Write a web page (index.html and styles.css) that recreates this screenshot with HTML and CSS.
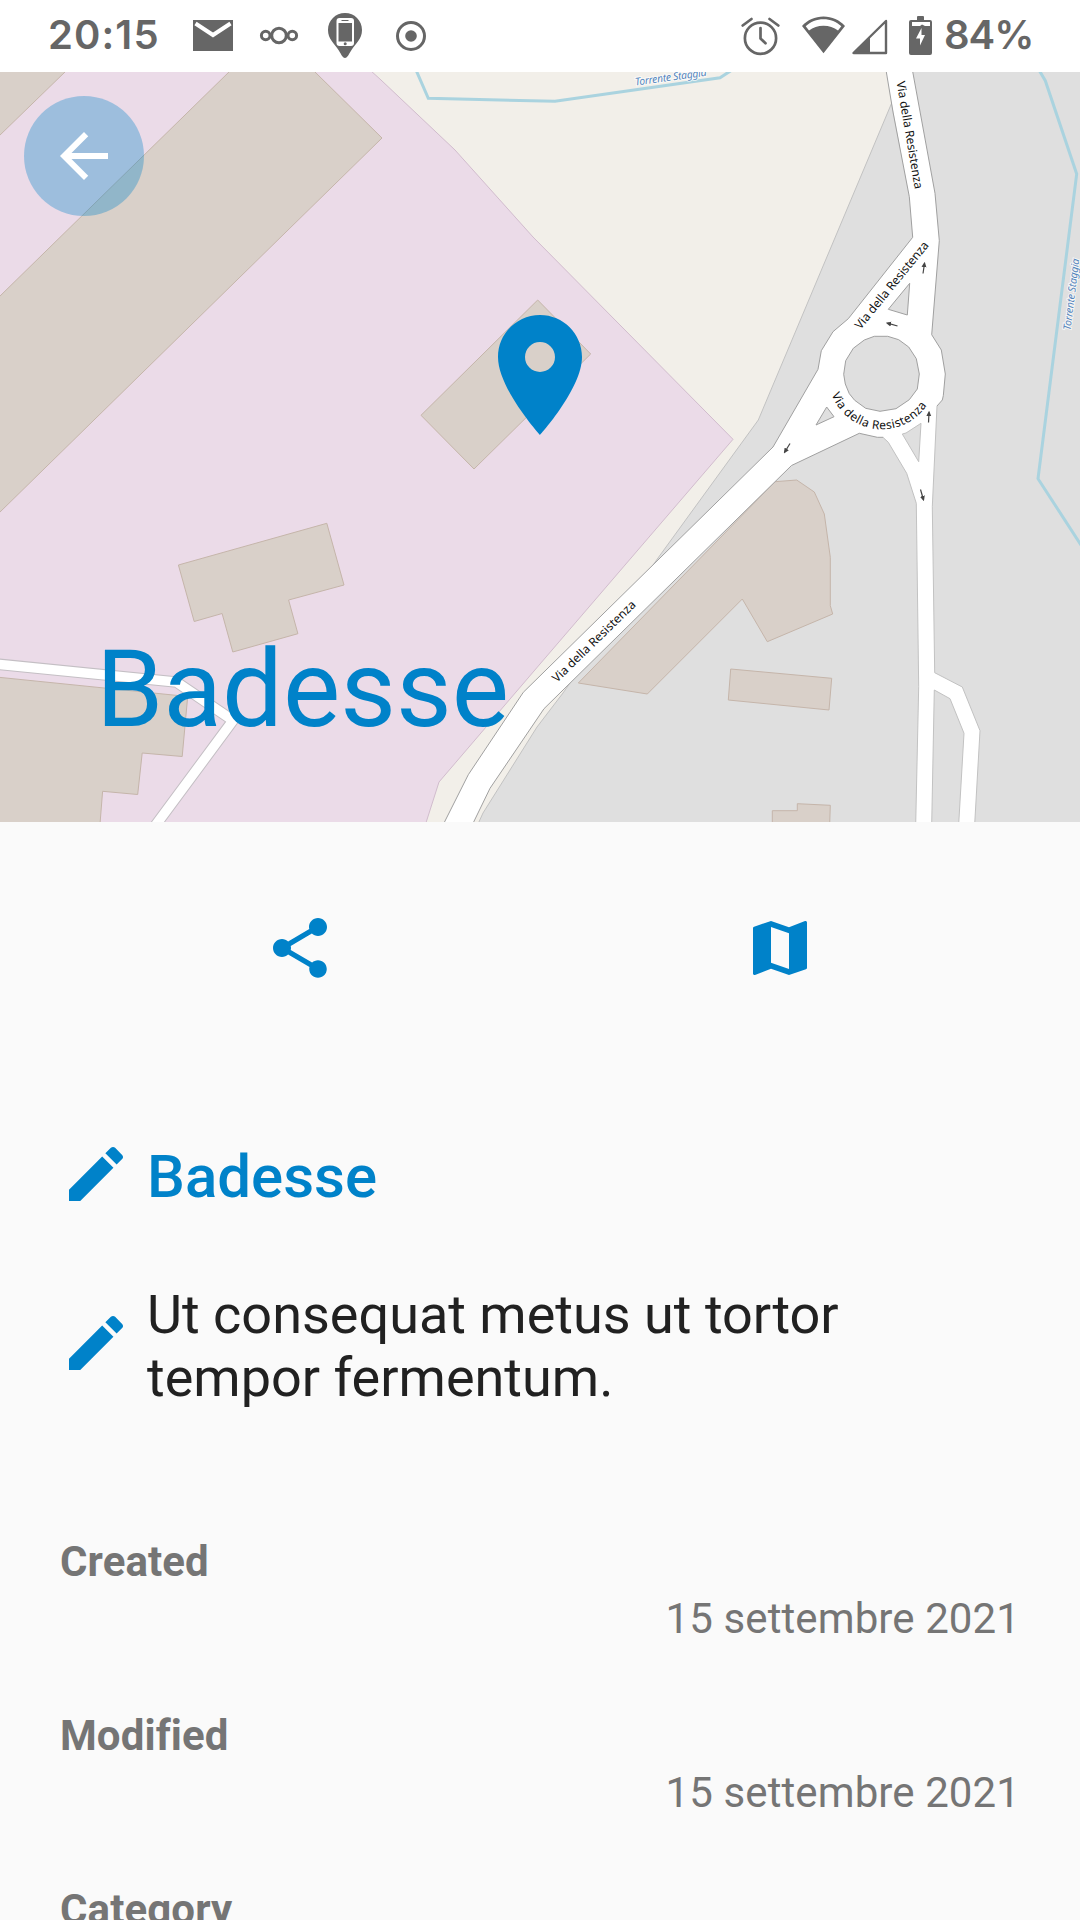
FILE: index.html
```html
<!DOCTYPE html>
<html lang="it">
<head>
<meta charset="utf-8">
<title>Badesse</title>
<link rel="stylesheet" href="styles.css">
</head>
<body>
<header class="status">
  <span class="clock">20:15</span>
  <svg class="status-left" width="250" height="72" viewBox="185 0 250 72">
    <path class="ink" d="M193 20h40v31h-40z"/>
    <path class="cut" d="M195.500 23.500L213 35l17.500-11.500"/>
    <g class="line"><circle cx="279" cy="35.500" r="7.300"/><circle cx="265.700" cy="35.500" r="4.300"/><circle cx="292.300" cy="35.500" r="4.300"/></g>
    <path class="ink" d="M345 13c-9.500 0-17 7.500-17 17 0 9 6 13 10.500 20 2 3 4 8 6.500 8s4.500-5 6.500-8c4.500-7 10.500-11 10.500-20 0-9.500-7.500-17-17-17z"/>
    <path class="paper" fill-rule="evenodd" d="M339.500 18h11.500a3 3 0 0 1 3 3v22a3 3 0 0 1-3 3h-11.500a3 3 0 0 1-3-3v-22a3 3 0 0 1 3-3zm-1 5v18.500h13.500v-18.500z"/>
    <path class="ink" d="M341.500 20h7v1h-7z"/><circle class="ink" cx="345.200" cy="43.700" r="1.500"/>
    <circle class="line" cx="411" cy="36" r="13.500"/><circle class="ink" cx="411" cy="36" r="5.800"/>
  </svg>
  <svg class="status-right" width="200" height="72" viewBox="740 0 200 72">
    <g class="line alarm"><circle cx="760.500" cy="38.200" r="15.600"/><path d="M760.500 28v10.500l5 4.800M742.700 25.500l8.800-6.500M778.300 25.500l-8.800-6.500"/></g>
    <path class="ink" fill-rule="evenodd" d="M823.500 16.500c8.500 0 16 3.500 21.500 9.500l-21.500 27.300L802 26c5.500-6 13-9.500 21.500-9.500zm0 2.700c-6.800 0-13 2.500-17.800 7l3.300 4.200c4-3 9-4.700 14.500-4.700s10.500 1.700 14.500 4.700l3.300-4.200c-4.800-4.500-11-7-17.800-7z"/>
    <path class="ink" d="M852.500 53.500L870 36v17.500z"/><path class="line thin" d="M853.500 53H886V21z"/>
    <path class="ink" fill-rule="evenodd" d="M918 16h5a1 1 0 0 1 1 1v3h6a2 2 0 0 1 2 2v31a2 2 0 0 1-2 2h-19a2 2 0 0 1-2-2V22a2 2 0 0 1 2-2h6v-3a1 1 0 0 1 1-1zm-6 6v4h8l2-1.500 3 1.500h5v-4zm9.500 6l-5.500 10.500h4v7l5-10.500h-3.500z"/>
  </svg>
  <span class="battery">84%</span>
</header>

<section class="hero">
  <svg class="map" width="1080" height="750" viewBox="0 72 1080 750">
    <defs>
      <marker id="head" viewBox="0 0 6 6" refX="4" refY="3" markerWidth="5.500" markerHeight="5.500" markerUnits="userSpaceOnUse" orient="auto"><path d="M0 .3L6 3L0 5.700z" fill="#444"/></marker>
      <path id="via-north" d="M896.500 82L915 190"/>
      <path id="via-slip" d="M860.500 330L930 244.500"/>
      <path id="via-ring" d="M831.500 394.500A54 54 0 0 0 930 400"/>
      <path id="via-south" d="M557 683L637.500 604.500"/>
      <path id="river-top" d="M635.500 85.500L709 75.500"/>
      <path id="river-east" d="M1070.500 330.500L1079.500 257"/>
    </defs>
    <!-- land use -->
    <path class="industrial" d="M-2 70H370L381 80 455 150 533 237 733 439.300 540 664 439 782 425.600 824H-2z"/>
    <path class="grey" d="M905 70L891.700 103 758.300 420 658 558 563 693 537 727 483 813 478 824H1082V70z"/>
    <!-- water -->
    <path class="river" d="M416 70L428.300 98.300 555 101.300 720 77.700 732 70M1039 70L1045.300 80.700 1076.700 174 1038 478.700 1082 546.500"/>
    <!-- buildings -->
    <g class="building">
      <path d="M-2 70H67L-2 137z"/>
      <path d="M-2 298L231 70H313L382 138-2 514z"/>
      <path d="M537.700 300L590.700 354 474 469 421 415.300z"/>
      <path d="M178.400 565L326.800 523.300 344 585 288.600 600 297.900 633.700 232.800 652 222.100 613.500 194.200 621.500z"/>
      <path d="M-2 677.200L187.700 696.500 182.200 756.500 142.200 753 137.700 794.500 102.600 791.300 100 824H-2z"/>
      <path d="M775 481.700L796.700 480 814.300 492 824.300 514 830.300 557.300V605.700L832.700 614 767.300 641.700 742.300 599 647.300 694 578.300 683z"/>
      <path d="M730.700 669L831.700 678.300 829 710 728.300 700z"/>
      <path d="M772.300 824V810.700H797.300V803.700L830.300 805.300 829.700 824z"/>
    </g>
    <!-- service road -->
    <path class="lane-edge" d="M-5 663.900L176.500 682 233 720.500 155 826"/>
    <path class="lane" d="M-5 663.900L176.500 682 233 720.500 155 826"/>
    <!-- main roads -->
    <path class="road" d="M885.600 70L909.300 196.700 912.700 237.300 848.300 318.700 833 331.700 821.300 350.700 818 369.300 773 447 523.300 692.300 468.300 774.700 443.500 824H472.700L490 788.300 544 708.700 791.500 465.500 859.300 433.300 877.300 437.300H883.300L888.300 442.300 906.700 473.300 916.300 503.300 918.700 686.700 915.700 824H931.700L934.300 690 950 698.700 964 733.300 958.700 824H974.700L980 730.700 962.300 687 934.700 672.700 932.300 506.700 937 406 942.300 400 943.300 395.700 945.300 374 941.300 350 931.700 334.700 939.300 240.700 935 193.300 912.400 70z"/>
    <g class="edge">
      <path d="M886 70L893 112 909.300 196.700 912.700 237.300 848.300 318.700 833 331.700 821.300 350.700 818 369.300 773 447 523.300 692.300 468.300 774.700 443.500 824M472.700 824L490 788.300 544 708.700 791.500 465.500 859.300 433.300 877.300 437.300H883.300M937 406L942.300 400 943.300 395.700 945.300 374 941.300 350 931.700 334.700 939.300 240.700 935 193.300 912.400 70"/>
      <path class="island" d="M909.700 283.300L888.300 309.300 907.300 315zM826.700 407L834 416.700 816 425z"/>
      <path class="island" d="M874.300 336.300H887.700L898.700 339.700 908.700 347 916.300 358.700 919.300 374 917.300 389 909.300 399.700 896 408.700 880 411.300 865.700 408.300 854.700 400.300 849.300 393.700 845.300 384 843.700 374.300 845.700 360.700 853.300 348.300 864.300 340z"/>
    </g>
    <g class="edge soft">
      <path d="M883.300 437.700L888.300 442.300 906.700 473.300 916.300 503.300 918.700 686.700 915.700 824M931.700 824L934.300 690 950 698.700 964 733.300 958.700 824M974.700 824L980 730.700 962.300 687 934.700 672.700 932.300 506.700 937 406"/>
      <path class="island" d="M921 423.300L918.700 461.700 902.300 434 906 433z"/>
    </g>
    <g class="arrow">
      <path d="M923 273.500L924.500 263.500"/><path d="M897.500 326L887.500 323.200"/><path d="M928.500 422.500L929 412.500"/><path d="M790 443.500L784.800 452"/><path d="M920.500 489.500L923.400 499.500"/>
    </g>
    <g class="street">
      <text><textPath href="#via-north" textLength="109">Via della Resistenza</textPath></text>
      <text><textPath href="#via-slip" textLength="109">Via della Resistenza</textPath></text>
      <text><textPath href="#via-ring" textLength="118">Via della Resistenza</textPath></text>
      <text><textPath href="#via-south" textLength="111">Via della Resistenza</textPath></text>
    </g>
    <g class="stream">
      <text><textPath href="#river-top" textLength="72">Torrente Staggia</textPath></text>
      <text><textPath href="#river-east" textLength="72">Torrente Staggia</textPath></text>
    </g>
  </svg>
  <button class="back" aria-label="Indietro"><svg width="72" height="72" viewBox="0 0 24 24"><path d="M20 11H7.830l5.590-5.590L12 4l-8 8 8 8 1.410-1.410L7.830 13H20v-2z"/></svg></button>
  <svg class="pin" width="144" height="144" viewBox="0 0 24 24"><path d="M12 2C8.130 2 5 5.130 5 9c0 5.250 7 13 7 13s7-7.750 7-13c0-3.870-3.130-7-7-7zm0 9.500a2.500 2.500 0 0 1 0-5 2.500 2.500 0 0 1 0 5z"/></svg>
  <h1 class="title">Badesse</h1>
</section>

<nav class="actions">
  <button class="action" aria-label="Condividi"><svg class="icon" viewBox="0 0 24 24"><path d="M18 16.080c-.76 0-1.440.3-1.960.77L8.910 12.700c.05-.23.090-.46.090-.7s-.040-.47-.090-.7l7.050-4.110c.54.5 1.250.81 2.040.81 1.660 0 3-1.340 3-3s-1.340-3-3-3-3 1.340-3 3c0 .24.040.47.090.7L8.040 9.810C7.500 9.310 6.790 9 6 9c-1.660 0-3 1.340-3 3s1.340 3 3 3c.79 0 1.500-.31 2.040-.81l7.120 4.160c-.05.21-.08.430-.08.650 0 1.610 1.310 2.920 2.920 2.920s2.920-1.310 2.920-2.920-1.310-2.920-2.920-2.920z"/></svg></button>
  <button class="action" aria-label="Mappa"><svg class="icon" viewBox="0 0 24 24"><path d="M20.500 3l-.16.030L15 5.100 9 3 3.360 4.900c-.21.070-.36.250-.36.480V20.500c0 .28.220.5.500.5l.16-.030L9 18.900l6 2.100 5.640-1.900c.21-.07.360-.25.360-.48V3.500c0-.28-.22-.5-.5-.5zM15 19l-6-2.110V5l6 2.110V19z"/></svg></button>
</nav>

<main class="details">
  <div class="field name">
    <svg class="icon" viewBox="0 0 24 24"><path d="M20.710 7.040c.39-.39.390-1.040 0-1.410l-2.340-2.340c-.37-.39-1.020-.39-1.410 0l-1.840 1.830 3.750 3.750M3 17.250V21h3.750L17.810 9.930l-3.750-3.750L3 17.250z"/></svg>
    <h2>Badesse</h2>
  </div>
  <div class="field about">
    <svg class="icon" viewBox="0 0 24 24"><path d="M20.710 7.040c.39-.39.390-1.040 0-1.410l-2.340-2.340c-.37-.39-1.020-.39-1.410 0l-1.840 1.830 3.750 3.750M3 17.250V21h3.750L17.810 9.930l-3.750-3.750L3 17.250z"/></svg>
    <p>Ut consequat metus ut tortor tempor fermentum.</p>
  </div>
  <dl class="meta">
    <dt>Created</dt><dd>15 settembre 2021</dd>
    <dt>Modified</dt><dd>15 settembre 2021</dd>
    <dt>Category</dt>
  </dl>
</main>
</body>
</html>
```

FILE: styles.css
```css
* { box-sizing: border-box; margin: 0; padding: 0; }
html, body { height: 1920px; overflow: hidden; }
body { width: 1080px; display: flex; flex-direction: column; background: #fafafa; font-family: Roboto, sans-serif; }
button { border: 0; background: none; }
svg { display: block; flex: none; }

.status { height: 72px; flex: none; display: flex; align-items: center; background: #fff; color: #666; font-family: Inter, sans-serif; font-size: 40px; font-weight: 600; line-height: 70px; padding-left: 48px; }
.clock { width: 137px; letter-spacing: 1.1px; padding-bottom: 2px; }
.status-right { margin-left: 305px; }
.battery { margin-left: 4px; letter-spacing: -1px; padding-bottom: 2px; }
.status .ink { fill: #666; }
.status .paper { fill: #fff; }
.status .cut { fill: none; stroke: #fff; stroke-width: 4; }
.status .line { fill: none; stroke: #666; stroke-width: 3; stroke-linecap: round; stroke-linejoin: round; }
.status .alarm { stroke-width: 2.7; }
.status .thin { stroke-width: 2.4; }

.hero { position: relative; height: 750px; flex: none; overflow: hidden; }
.map { background: #f2efe9; }
.industrial { fill: #ebdbe8; stroke: #d1bccd; }
.grey { fill: #dfdfdf; stroke: #c2c2c2; }
.river { fill: none; stroke: #aad3df; stroke-width: 3; }
.building { fill: #d9d0c9; stroke: #c5b5aa; }
.lane-edge { fill: none; stroke: #c4bfc4; stroke-width: 11.500; }
.lane { fill: none; stroke: #fff; stroke-width: 9.500; }
.road { fill: #fff; }
.edge { fill: none; stroke: #a0a0a0; }
.edge.soft { stroke: #c2c2c2; }
.edge .island { fill: #dfdfdf; }
.arrow { stroke: #444; stroke-width: 1.200; }
.arrow path { marker-end: url(#head); }
.street, .stream { font-family: "Noto Sans", sans-serif; font-size: 12px; }
.street { fill: #111; }
.stream { font-style: italic; font-size: 10.500px; fill: #5585bd; stroke: #ffffffb0; stroke-width: 2; paint-order: stroke; }
.back { position: absolute; left: 24px; top: 24px; width: 120px; height: 120px; border-radius: 50%; background: rgba(0, 130, 201, .33); display: grid; place-items: center; }
.back svg { fill: #fff; }
.pin { position: absolute; left: 468px; top: 231px; fill: #0082c9; }
.title { position: absolute; left: 96px; top: 554px; font-size: 108px; line-height: 126px; font-weight: 400; color: #0082c9; }

.actions { flex: none; display: grid; grid-template-columns: 1fr 1fr; padding: 90px 60px 0; height: 301px; align-items: start; }
.action { display: grid; justify-items: center; }
.icon { width: 72px; height: 72px; fill: #0082c9; }

.details { padding: 0 60px; }
.field { display: flex; align-items: center; gap: 15px; }
.name { height: 102px; }
.name h2 { font-size: 60px; font-weight: 500; line-height: 70px; color: #0082c9; padding-top: 6px; }
.about { height: 126px; margin: 55px 0 127px; }
.about p { width: 720px; font-size: 54px; line-height: 63px; color: #212121; padding-top: 6px; }
.meta { font-size: 42px; line-height: 57px; letter-spacing: .1px; color: #757575; }
.meta dt { font-weight: 700; }
.meta dd { text-align: right; margin-bottom: 60px; }
```
